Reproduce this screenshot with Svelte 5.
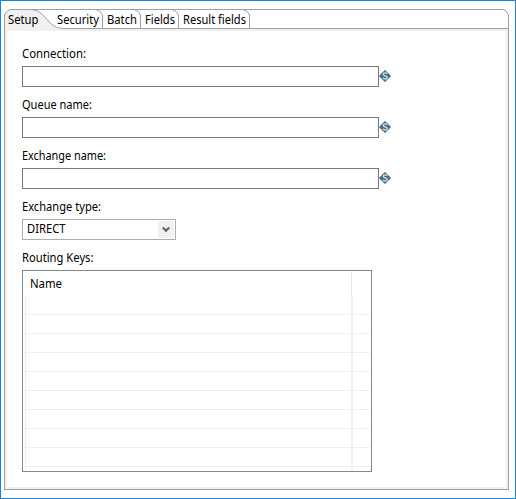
<script>
  const tabs = [
    { label: 'Setup', width: 49, text: 30.5 },
    { label: 'Security', width: 50, text: 42 },
    { label: 'Batch', width: 38, text: 30 },
    { label: 'Fields', width: 38, text: 30 },
    { label: 'Result fields', width: 70, text: 63 }
  ];
  const fields = [
    { label: 'Connection:', text: 64 },
    { label: 'Queue name:', text: 70 },
    { label: 'Exchange name:', text: 84 }
  ];
  const rows = Array.from({ length: 8 });
</script>

{#snippet word(label, width)}
  <svg class="word" width={width + 2} height="18"><text x="0" y="13" textLength={width} lengthAdjust="spacingAndGlyphs">{label}</text></svg>
{/snippet}

<main>
  <section class="folder">
    <header>
      <svg class="outline" width="505" height="20" fill="none" stroke="#a0a0a0">
        <path d="M.5 20V6L2 3.5 4 1.5 6 .5H27C42 .5 43 19.5 59 19.5H505V20Z" fill="#f0f0f0" stroke="none" />
        <path d="M.5 20V6L2 3.5 4 1.5 6 .5H499L502 2 504.5 6V20M27 .5C42 .5 43 19.5 59 19.5H505" />
        {#each [98, 136, 174, 245] as x}
          <path d="M{x - 6} .5L{x - 2} 2.5 {x + 0.5} 6V19.5" />
        {/each}
      </svg>
      <nav>
        {#each tabs as tab}
          <button style:width="{tab.width}px">{@render word(tab.label, tab.text)}</button>
        {/each}
      </nav>
    </header>
    <div class="body">
      {#each fields as field}
        <div class="field">
          {@render word(field.label, field.text)}
          <div class="line">
            <input type="text" aria-label={field.label} />
            <svg width="13" height="12" viewBox="0 0 13 12">
              <path d="M6 .5L11.6 6 6 11.5.4 6Z" fill="#426b86" stroke="#426b86" stroke-linejoin="round" />
              <path d="M8.3 3.7Q7.5 2.9 6.1 2.9C3.8 2.9 3.8 5.3 5.7 5.7L6.9 6.1C9.1 6.8 8.5 9 6.2 9Q4.8 9 3.9 8.1" fill="none" stroke="#d3dfe7" stroke-width="1.4" />
            </svg>
          </div>
        </div>
      {/each}
      <div class="field">
        {@render word('Exchange type:', 79)}
        <div class="select">
          {@render word('DIRECT', 38.5)}
          <span class="arrow">
            <svg width="8" height="7"><path d="M.8 1.5L4 4.7 7.2 1.5" fill="none" stroke="#606060" stroke-width="2.1" /></svg>
          </span>
        </div>
      </div>
      <div class="field">
        {@render word('Routing Keys:', 71.5)}
        <div class="table">
          <div class="head"><div>{@render word('Name', 32)}</div></div>
          <div class="grid">
            <div class="row first"></div>
            {#each rows as _}<div class="row"></div>{/each}
          </div>
        </div>
      </div>
    </div>
  </section>
</main>

<style>
  main {
    box-sizing: border-box;
    width: 516px;
    height: 499px;
    padding: 8px 6px 8px 3px;
    border: 1px solid #1883d7;
    background: #fff;
    font: 12px "Noto Sans", "Open Sans", sans-serif;
    color: #000;
  }
  .folder { width: 505px; height: 481px; display: flex; flex-direction: column; }
  header { height: 20px; position: relative; flex: none; }
  .outline { position: absolute; left: 0; top: 0; display: block; }
  nav { position: relative; display: flex; height: 20px; padding-left: 4px; box-sizing: border-box; }
  button { border: 0; padding: 2px 0 0; margin: 0; background: none; text-align: left; height: 20px; flex: none; font: inherit; color: inherit; }
  .body {
    box-sizing: border-box;
    flex: 1;
    border: 1px solid #a0a0a0;
    border-top: 0;
    box-shadow: inset 0 0 0 2px #f0f0f0;
    padding: 16px 0 0 17px;
  }
  .word { display: block; flex: none; overflow: visible; fill: #000; }
  .field { display: flex; flex-direction: column; gap: 3px; margin-bottom: 9px; }
  .line { display: flex; height: 21px; align-items: flex-start; }
  .line svg { margin-top: 4px; overflow: visible; }
  input { box-sizing: border-box; width: 357px; height: 21px; border: 1px solid #7a7a7a; padding: 0 4px; background: #fff; font: inherit; border-radius: 0; }
  .select { box-sizing: border-box; width: 154px; height: 21px; border: 1px solid #adadad; padding: 1px 1px 1px 4px; display: flex; justify-content: space-between; }
  .select > .word { margin-top: -1px; }
  .arrow { width: 16px; height: 17px; background: #f0f0f0; display: flex; align-items: center; justify-content: center; }
  .table { box-sizing: border-box; width: 350px; height: 202px; border: 1px solid #828790; padding: 1px 1px 2px 2px; }
  .head { height: 24px; display: flex; }
  .head div { box-sizing: border-box; width: 327px; padding: 3px 0 0 5px; border-right: 1px solid #e5e5e5; }
  .grid { height: 174px; background: linear-gradient(#edf2f8, #edf2f8) 325px 0 / 2px 100% no-repeat; border-left: 1px solid #e8f0fb; box-sizing: border-box; }
  .row { box-sizing: border-box; height: 19px; border-bottom: 1px solid #f0f0f0; }
</style>
